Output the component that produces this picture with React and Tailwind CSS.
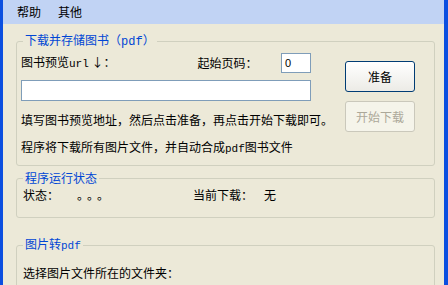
import React from 'react';

const cjk = { fontFamily: '"Noto Sans CJK SC", "Noto Sans", sans-serif' };
const mono = { fontFamily: '"Liberation Mono", "DejaVu Sans Mono", monospace' };

function Group({ title, className, children }) {
  return (
    <fieldset className={`border border-[#d0d0bf] rounded-[3px] pl-[4px] pr-[4px] ${className}`}>
      <legend className="ml-[2px] px-[2px] text-[12px] leading-[16px] text-[#0046d5]">{title}</legend>
      {children}
    </fieldset>
  );
}

function TitleBar() {
  return (
    <div className="h-[8px] overflow-hidden bg-gradient-to-b from-[#0a5ee8] to-[#0352e0]">
      <div className="-mt-[14px] h-[22px] flex items-center pl-[22px] pr-[5px]">
        <span className="text-white font-bold text-[13px] leading-[18px] whitespace-nowrap">图书下载存储工具 v1.0 by pdf-maker</span>
        <div className="ml-auto flex gap-[2px]">
          <div className="w-[21px] h-[21px] rounded-[3px] border border-white bg-[#2a6ef2]" />
          <div className="w-[21px] h-[21px] rounded-[3px] border border-white bg-[#2a6ef2]" />
          <div className="w-[21px] h-[21px] rounded-[3px] border border-white bg-[#e2572f]" />
        </div>
      </div>
    </div>
  );
}

export default function App() {
  return (
    <div className="w-[448px] h-[285px] overflow-hidden bg-[#0b4fe0] flex flex-col text-[12px] text-black" style={cjk}>
      <TitleBar />
      <div className="flex-1 flex flex-col border-l-[3px] border-r-[4px] border-[#0b4fe0]">
        <div className="h-[24px] shrink-0 bg-[#c1d3f4] flex items-center pl-[14px] gap-[17px] text-[12px]">
          <span>帮助</span>
          <span>其他</span>
        </div>
        <div className="flex-1 bg-[#ece9d8] pl-[13px] pr-[9px] flex flex-col">
          <Group title={<>下载并存储图书（<span style={mono}>pdf</span>）</>} className="mt-[8px] pb-[7px]">
            <div className="flex">
              <div className="w-[290px] flex flex-col">
                <div className="mt-[3px] h-[20px] flex items-center">
                  <span>图书预览<span style={mono} className="text-[11px]">url</span> ↓：</span>
                  <span className="ml-[82px]">起始页码：</span>
                  <div className="ml-auto w-[30px] h-[20px] bg-white border border-[#7f9db9] flex items-center pl-[3px] text-[11px]" style={{ fontFamily: '"Liberation Sans", sans-serif' }}>0</div>
                </div>
                <div className="mt-[7px] h-[21px] bg-white border border-[#7f9db9]" />
                <div className="mt-[10px] leading-[18px] whitespace-nowrap">填写图书预览地址，然后点击准备，再点击开始下载即可。</div>
                <div className="mt-[9px] leading-[18px] whitespace-nowrap">程序将下载所有图片文件，并自动合成<span style={mono} className="text-[11px]">pdf</span>图书文件</div>
              </div>
              <div className="ml-[34px] flex flex-col">
                <button className="mt-[11px] w-[70px] h-[31px] rounded-[3px] border border-[#003c74] bg-gradient-to-b from-white to-[#ecebe6] text-[12px]">准备</button>
                <button className="mt-[9px] w-[70px] h-[31px] rounded-[3px] border border-[#cac8bb] bg-[#f5f4ea] text-[12px] text-[#aca899]">开始下载</button>
              </div>
            </div>
          </Group>
          <Group title="程序运行状态" className="mt-[4px] pb-[13px]">
            <div className="h-[18px] flex items-center pl-[2px]">
              <span>状态：</span>
              <span className="ml-[18px] tracking-[4px]">。。。</span>
              <span className="ml-[80px]">当前下载：</span>
              <span className="ml-[11px]">无</span>
            </div>
          </Group>
          <Group title={<>图片转<span style={mono} className="text-[11px]">pdf</span></>} className="mt-[18px] pb-[20px]">
            <div className="mt-[10px] leading-[18px] pl-[2px]">选择图片文件所在的文件夹：</div>
          </Group>
        </div>
      </div>
    </div>
  );
}
